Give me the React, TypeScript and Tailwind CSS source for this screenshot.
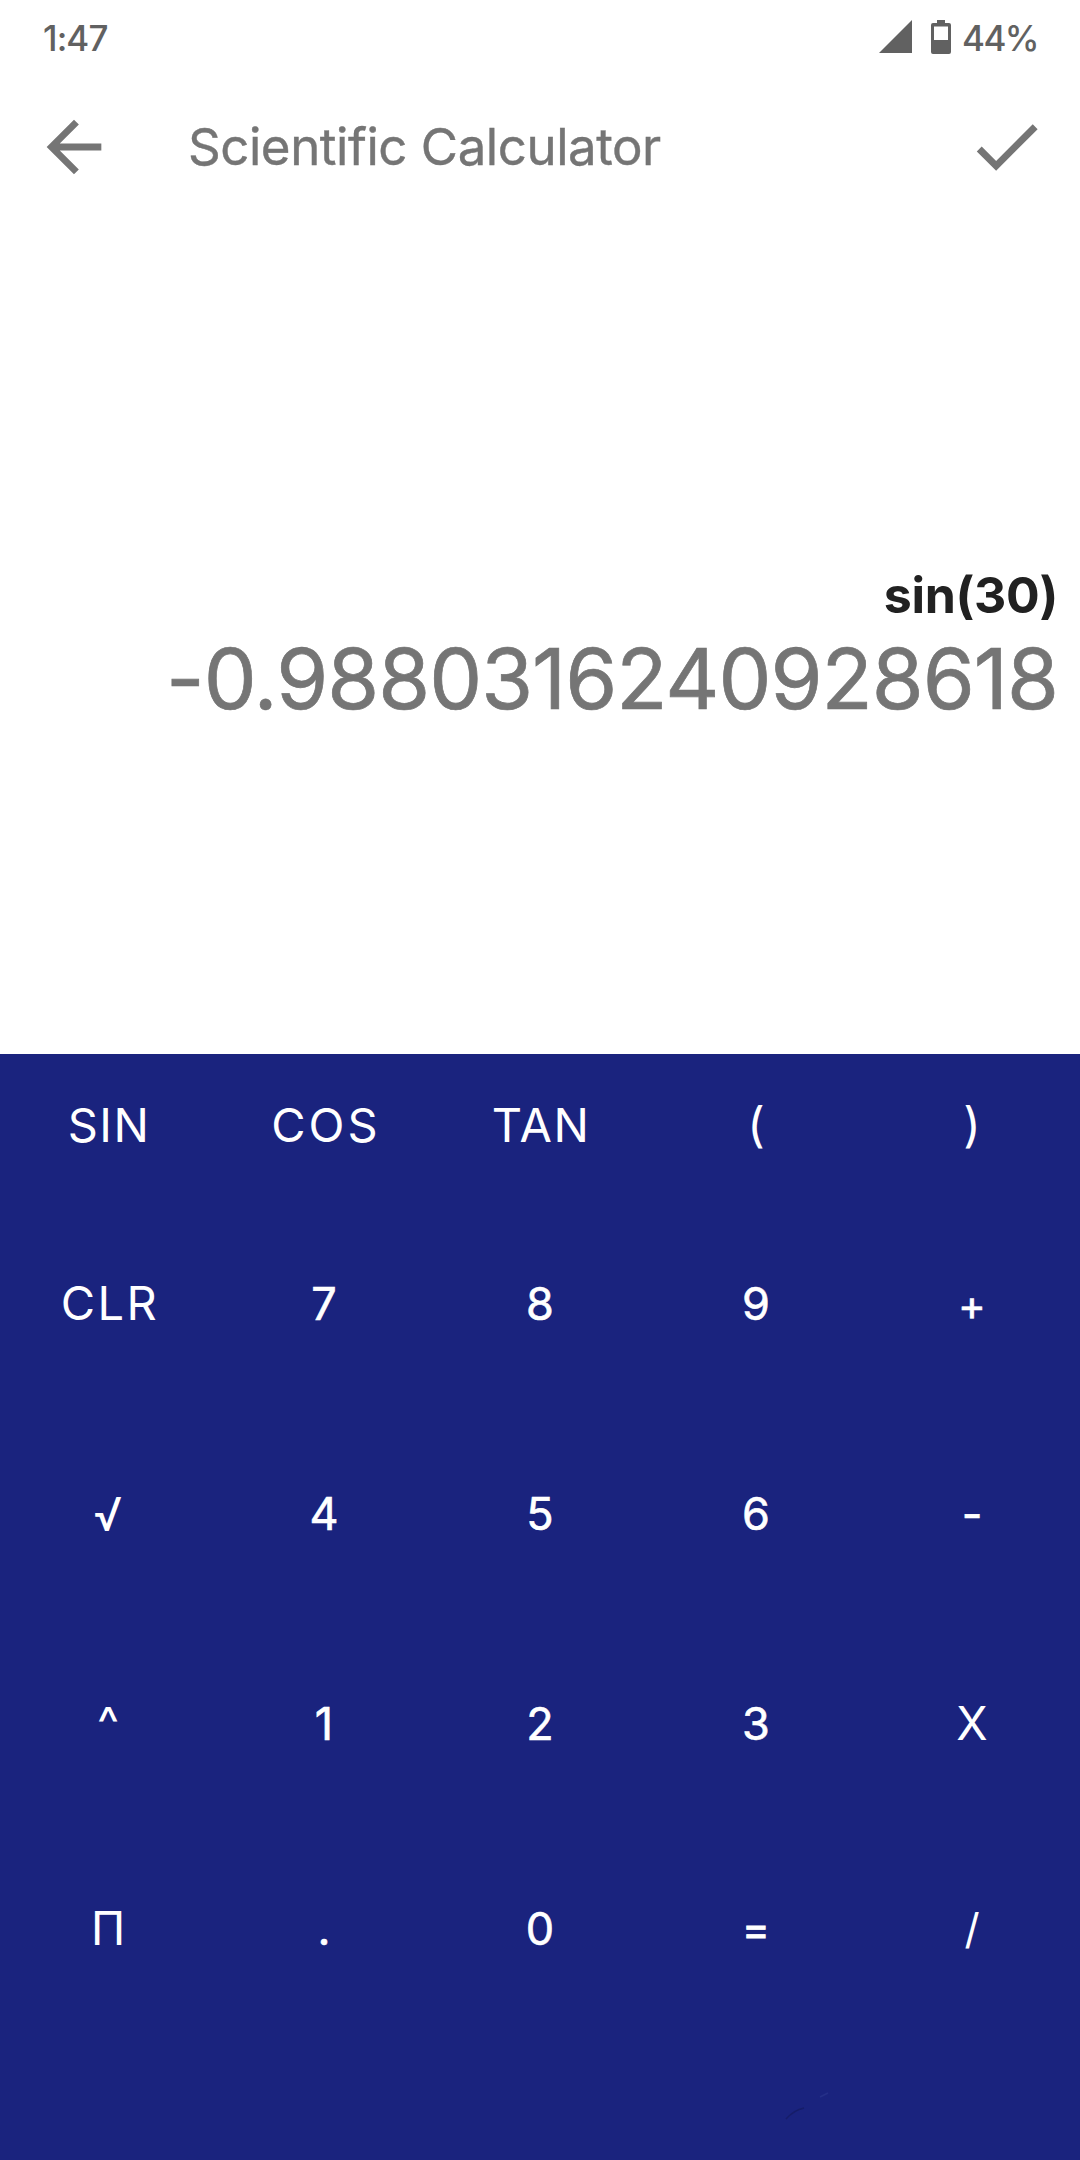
import React from 'react';

interface KeyDef {
  label: string;
  className: string;
}

interface KeyRow {
  height: string;
  keys: KeyDef[];
}

const digit = 'text-[45px] [-webkit-text-stroke:0.6px]';

const rows: KeyRow[] = [
  {
    height: 'h-[142px]',
    keys: [
      { label: 'SIN', className: 'text-[47px] tracking-[1.5px] pl-0.5' },
      { label: 'COS', className: 'text-[47px] tracking-[3px] pl-1' },
      { label: 'TAN', className: 'text-[47px] tracking-[1.5px] pl-0.5' },
      { label: '(', className: 'text-[48px]' },
      { label: ')', className: 'text-[48px]' },
    ],
  },
  {
    height: 'h-[215px]',
    keys: [
      { label: 'CLR', className: 'text-[47px] tracking-[2.4px] pl-1' },
      { label: '7', className: digit },
      { label: '8', className: digit },
      { label: '9', className: digit },
      { label: '+', className: 'text-[42px] pt-0.5 [-webkit-text-stroke:0.6px]' },
    ],
  },
  {
    height: 'h-[206px]',
    keys: [
      { label: '√', className: 'text-[46px]' },
      { label: '4', className: digit },
      { label: '5', className: digit },
      { label: '6', className: digit },
      { label: '-', className: digit },
    ],
  },
  {
    height: 'h-[213px]',
    keys: [
      { label: '^', className: 'text-[47px]' },
      { label: '1', className: digit },
      { label: '2', className: digit },
      { label: '3', className: digit },
      { label: 'X', className: 'text-[46px]' },
    ],
  },
  {
    height: 'h-[197px]',
    keys: [
      { label: 'П', className: 'text-[46px]' },
      { label: '.', className: digit },
      { label: '0', className: digit },
      { label: '=', className: 'text-[42px] [-webkit-text-stroke:0.8px]' },
      { label: '/', className: 'text-[42px]' },
    ],
  },
];

const StatusBar: React.FC = () => (
  <div className="flex h-[77px] items-center justify-between pl-[43px] pr-[42px] text-[#616161]">
    <span className="text-[35px] font-medium tracking-[-0.9px]">1:47</span>
    <div className="flex items-center">
      <svg width="33" height="33" viewBox="0 0 33 33" className="mb-1" fill="currentColor">
        <path d="M33 0v33H0z" />
      </svg>
      <svg width="20" height="34" viewBox="0 0 20 34" className="mb-1 ml-[19px]" fill="currentColor">
        <path
          fillRule="evenodd"
          d="M6 0h8v3h4a2 2 0 0 1 2 2v27a2 2 0 0 1-2 2H2a2 2 0 0 1-2-2V5a2 2 0 0 1 2-2h4zM3 6.5V20h14V6.5z"
        />
      </svg>
      <span className="ml-[11px] text-[35px] font-medium tracking-[-1.6px]">44%</span>
    </div>
  </div>
);

const Header: React.FC = () => (
  <header className="flex h-[139px] items-center pl-[33px] pr-[32px] text-[#757575]">
    <button className="flex-none">
      <svg width="82" height="82" viewBox="0 0 24 24" fill="currentColor">
        <path d="M20 11H7.83l5.59-5.59L12 4l-8 8 8 8 1.41-1.41L7.83 13H20v-2z" />
      </svg>
    </button>
    <h1 className="ml-[73px] flex-1 pt-px text-[51px] tracking-[-0.45px] [-webkit-text-stroke:0.4px]">
      Scientific Calculator
    </h1>
    <button className="flex-none">
      <svg width="83" height="83" viewBox="0 0 24 24" fill="currentColor">
        <path d="M9 16.17L4.83 12l-1.42 1.41L9 19 21 7l-1.41-1.41z" />
      </svg>
    </button>
  </header>
);

export default function App() {
  return (
    <div className="flex h-[2160px] w-[1080px] flex-col overflow-hidden bg-white font-[Inter,sans-serif]">
      <StatusBar />
      <Header />

      {/* Expression and result */}
      <div className="flex flex-1 flex-col items-end justify-center pt-[20px] pr-[22px]">
        <div className="text-[50px] leading-[68px] font-bold tracking-[-0.3px] text-[#212121]">sin(30)</div>
        <div className="text-[84px] leading-[100px] tracking-[-1px] text-[#757575] [-webkit-text-stroke:0.7px]">
          -0.9880316240928618
        </div>
      </div>

      {/* Keypad */}
      <div className="h-[1106px] flex-none bg-[#1a237e] text-white">
        {rows.map((row, i) => (
          <div key={i} className={`grid grid-cols-5 ${row.height}`}>
            {row.keys.map((key) => (
              <button key={key.label} className={`flex items-center justify-center ${key.className}`}>
                {key.label}
              </button>
            ))}
          </div>
        ))}
        <svg width="1080" height="133" viewBox="0 0 1080 133" fill="none" strokeWidth="1.5">
          <path d="M786 92q8-9 18-11" stroke="#161d69" />
          <path d="M820 70l8-4" stroke="#263089" />
        </svg>
      </div>
    </div>
  );
}
